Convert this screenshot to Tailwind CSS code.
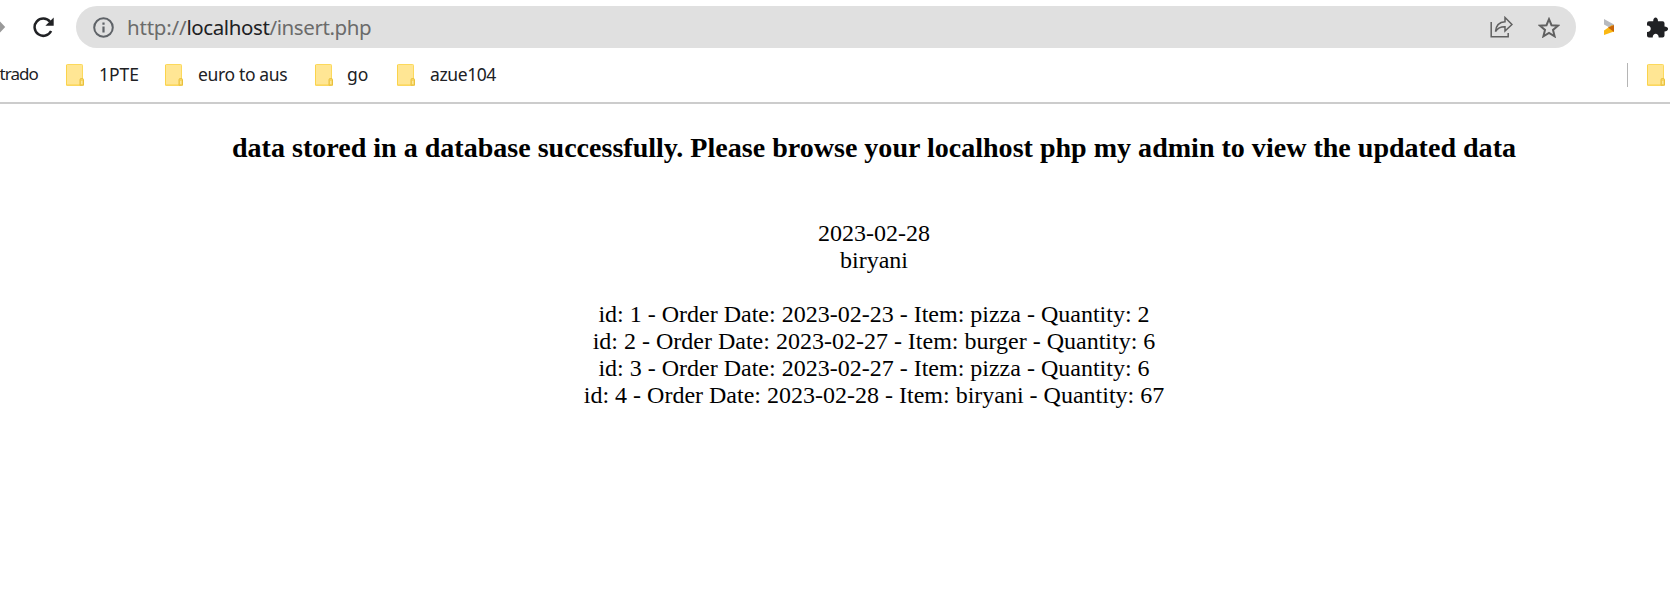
<!DOCTYPE html>
<html lang="en">
<head>
<meta charset="utf-8">
<title>localhost/insert.php</title>
<script src="https://cdn.jsdelivr.net/npm/@tailwindcss/browser@4"></script>
</head>
<body class="w-[1670px] h-[612px] overflow-hidden bg-white">
<svg class="hidden">
  <symbol id="folder" viewBox="0 0 18 22">
    <rect x=".5" y=".5" width="16" height="20.5" rx=".8" fill="#ffe694" stroke="#fcd95c"/>
    <path d="M.5 1v20.3H14" fill="none" stroke="#fbd34b"/>
    <path d="M14 21.3v-5.5q0-1.3 1.3-1.3h.9q1.3 0 1.3 1.3v5.5z" fill="#f7d560" stroke="#e9c03e"/>
    <path d="M15.8 17v3" stroke="#fff0b5"/>
  </symbol>
</svg>
<header class="h-[104px] border-b-2 border-[#cccccc] font-['Noto_Sans','Open_Sans',sans-serif]">
  <div class="flex items-center h-[54px]">
    <svg class="w-[6px] h-[12px] shrink-0" viewBox="0 0 6 12"><path d="M0 .5L5.2 6L0 11.5z" fill="#999"/></svg>
    <svg class="ml-[27px] w-[21px] h-[21px] shrink-0" viewBox="0 0 21 21"><path d="M17 4.6A8.7 8.7 0 1 0 18.1 14" fill="none" stroke="#202124" stroke-width="2.5"/><path d="M20.7.5v8.3h-8.3z" fill="#202124"/></svg>
    <div class="ml-[22px] w-[1500px] h-[42px] rounded-full bg-[#e0e0e0] flex items-center shrink-0">
      <svg class="ml-[17px] w-[21px] h-[21px] shrink-0" viewBox="0 0 21 21"><circle cx="10.5" cy="10.5" r="9.3" fill="none" stroke="#5f6368" stroke-width="2"/><path d="M10.5 9.5v6M10.5 5.4v2.3" stroke="#5f6368" stroke-width="2.2"/></svg>
      <div class="ml-[13px] text-[20.5px] leading-[28px] tracking-[-0.4px] whitespace-nowrap text-[#6b6b6b]"><span class="tracking-[-0.2px]">http://</span><span class="text-[#202124]">localhost</span><span>/insert.php</span></div>
      <svg class="ml-auto w-[23px] h-[22px]" viewBox="0 0 23 22" fill="none" stroke="#606060" stroke-width="1.5"><path d="M1.2 6v14.8h17V17"/><path d="M5.5 15.5C6 9.5 9 6 15 5.7V1.5l7 7-7 6.5v-4.2c-4.5-.1-7.3 1.3-9.5 4.7z"/></svg>
      <svg class="ml-[25px] mr-[16px] w-[22px] h-[21px]" viewBox="0 0 22 21"><path d="M11 2.2l2.5 6 6.5.5-5 4.2 1.6 6.4-5.6-3.4-5.6 3.4L7 12.9 2 8.7l6.5-.5z" fill="none" stroke="#606060" stroke-width="2"/></svg>
    </div>
    <svg class="ml-[27px] w-[11px] h-[18px] shrink-0" viewBox="0 0 11 18"><path d="M1 1l10 5.500v5.500L1 6.500z" fill="#b7babf"/><path d="M1 12.500l8-5.500 2 2v4.500L1 17z" fill="#fbb813"/><path d="M5 9.500l6-2.500v7z" fill="#c8650a"/></svg>
    <svg class="ml-[33px] w-[21px] h-[21px] shrink-0" viewBox="0 0 21 21"><path d="M6.2 4.2C6.2-.7 11-.7 11 4.2h4.500q2 0 2 2v3.200c4.700 0 4.700 5 0 5v4.200q0 2-2 2h-3.800c0-5-6-5-6 0H2q-2 0-2-2v-3.700c5 0 5-6.300 0-6.300V6.200q0-2 2-2z" fill="#202124"/></svg>
  </div>
  <nav class="flex items-center h-[42px] text-[17.5px] leading-[24px] whitespace-nowrap text-[#202124]">
    <div class="w-[66px] h-6 flex justify-end shrink-0 -mt-[2px]"><span class="mr-[28px] text-[17px] tracking-[-0.9px]">trado</span></div>
    <div class="w-[99px] flex items-center shrink-0"><svg class="w-[18px] h-[22px] mr-[15px]"><use href="#folder"/></svg><span class="-mt-[2px]">1PTE</span></div>
    <div class="w-[150px] flex items-center shrink-0"><svg class="w-[18px] h-[22px] mr-[15px]"><use href="#folder"/></svg><span class="-mt-[2px] tracking-[-0.35px]">euro to aus</span></div>
    <div class="w-[82px] flex items-center shrink-0"><svg class="w-[18px] h-[22px] mr-[14px]"><use href="#folder"/></svg><span class="-mt-[2px]">go</span></div>
    <div class="flex items-center shrink-0"><svg class="w-[18px] h-[22px] mr-[15px]"><use href="#folder"/></svg><span class="-mt-[2px] tracking-[-0.4px]">azue104</span></div>
    <div class="ml-auto w-px h-6 bg-[#b5b5b5]"></div>
    <svg class="ml-[19px] mr-[5px] w-[18px] h-[22px] shrink-0"><use href="#folder"/></svg>
  </nav>
</header>
<main class="w-[1748px] text-center text-black whitespace-nowrap font-['Liberation_Serif',serif] text-[24px] leading-[27px]">
  <h3 class="pt-[28px] text-[28.05px] leading-[32px] font-bold">data stored in a database successfully. Please browse your localhost php my admin to view the updated data</h3>
  <p class="pt-[56px]">2023-02-28<br>biryani</p>
  <p class="pt-[27px]">id: 1 - Order Date: 2023-02-23 - Item: pizza - Quantity: 2<br>id: 2 - Order Date: 2023-02-27 - Item: burger - Quantity: 6<br>id: 3 - Order Date: 2023-02-27 - Item: pizza - Quantity: 6<br>id: 4 - Order Date: 2023-02-28 - Item: biryani - Quantity: 67</p>
</main>
</body>
</html>
